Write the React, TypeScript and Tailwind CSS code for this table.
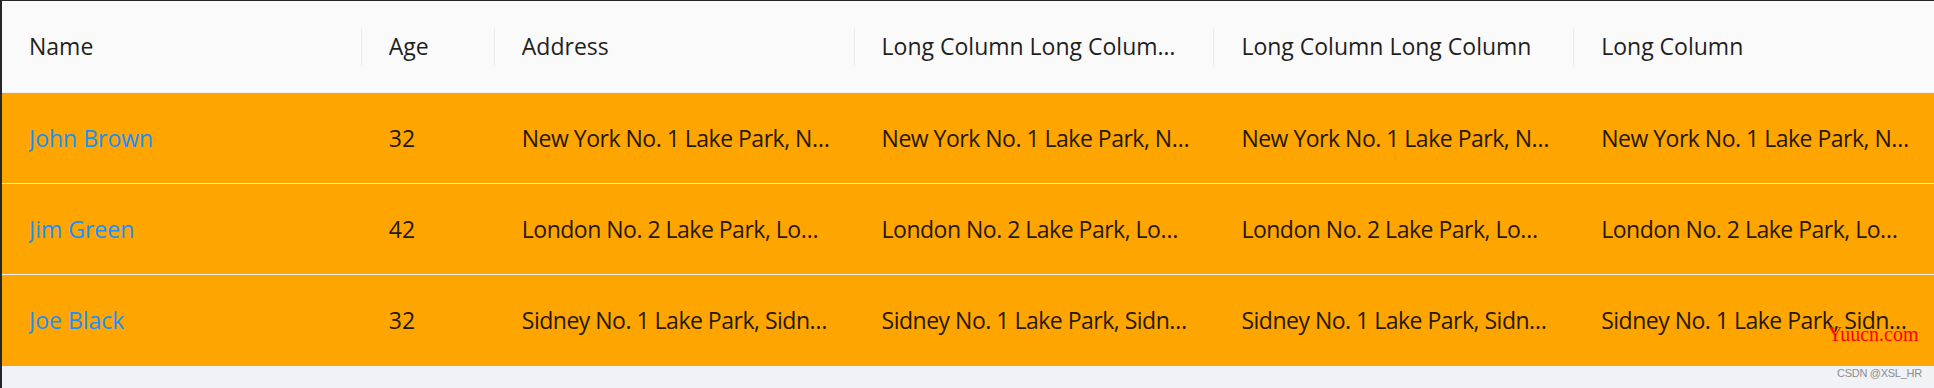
import React from "react";

const rows = [
  { name: "John Brown", age: "32", addr: "New York No. 1 Lake Park, New York No. 1 Lake Park", pad: "pl-[27px] pr-[20px]" },
  { name: "Jim Green", age: "42", addr: "London No. 2 Lake Park, London No. 2 Lake Park", pad: "pl-[27px] pr-[27px]" },
  { name: "Joe Black", age: "32", addr: "Sidney No. 1 Lake Park, Sidney No. 1 Lake Park", pad: "pl-[27px] pr-[20px]" },
];

const headers = [
  "Name",
  "Age",
  "Address",
  "Long Column Long Column Long Column",
  "Long Column Long Column",
  "Long Column",
];

const grid = "grid grid-cols-[1fr_133px_1fr_1fr_1fr_1fr]";

export default function App() {
  return (
    <div
      className="relative w-[1934px] h-[388px] bg-[#f0f2f5] border-l-2 border-t border-[#262626] overflow-hidden"
      style={{ fontFamily: '"Open Sans", "Noto Sans", sans-serif' }}
    >
      <div className={`${grid} h-[92px] bg-[#fafafa] border-b border-[#f0f0f0] text-[23px] text-[#1f1f1f]`}>
        {headers.map((h, i) => (
          <div key={i} className="relative flex items-center min-w-0 px-[27px]">
            <span className="truncate">{h}</span>
            {i < headers.length - 1 && (
              <span className="absolute right-0 top-1/2 -translate-y-1/2 h-[37px] w-px bg-[#ebebeb]" />
            )}
          </div>
        ))}
      </div>
      {rows.map((r, ri) => (
        <div
          key={ri}
          className={`${grid} h-[91px] bg-[#ffa500] text-[23px] text-[#261900] ${ri < rows.length - 1 ? "border-b border-[#f0f0f0]" : ""}`}
        >
          <div className="flex items-center min-w-0 px-[27px]">
            <span className="truncate text-[#1890ff]">{r.name}</span>
          </div>
          <div className="flex items-center min-w-0 px-[27px]">
            <span className="truncate">{r.age}</span>
          </div>
          {[0, 1, 2, 3].map((k) => (
            <div key={k} className={`flex items-center min-w-0 ${r.pad}`}>
              <span className="truncate tracking-[-0.5px]">{r.addr}</span>
            </div>
          ))}
        </div>
      ))}
      <div
        className="absolute left-[1826px] top-[323px] text-[20px] leading-none text-[#ff0000]"
        style={{ fontFamily: '"Liberation Serif", serif' }}
      >
        Yuucn.com
      </div>
      <div
        className="absolute left-[1835px] top-[367px] text-[11px] leading-none text-[#8c8c8c] tracking-tight"
        style={{ fontFamily: '"Liberation Sans", sans-serif' }}
      >
        CSDN @XSL_HR
      </div>
    </div>
  );
}
